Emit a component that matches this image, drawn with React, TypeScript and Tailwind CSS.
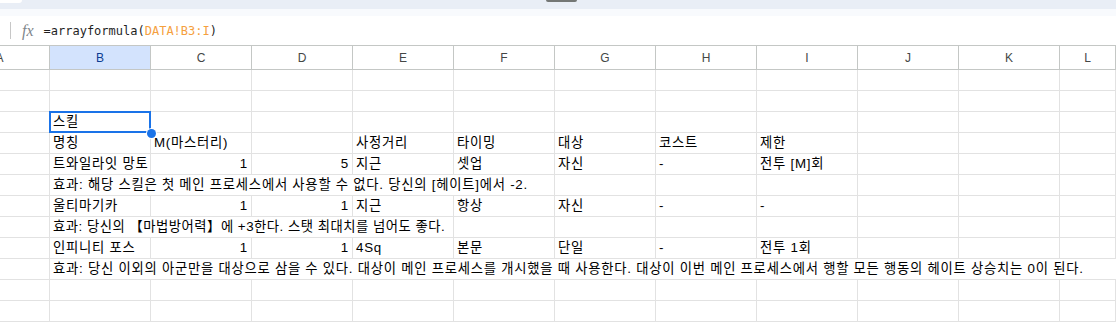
import React from 'react';

const COLS = ['A', 'B', 'C', 'D', 'E', 'F', 'G', 'H', 'I', 'J', 'K', 'L'];

type Cell = { t?: string; right?: boolean };
type Row = { cells?: Cell[]; span?: { text: string; cols: number; tight?: boolean } };

const empty = (): Row => ({ cells: COLS.map(() => ({})) });

const line = (vals: (string | [string, boolean])[]): Row => ({
    cells: COLS.map((_, i) => {
        const v = vals[i];
        if (v === undefined || v === '') return {};
        if (Array.isArray(v)) return { t: v[0], right: v[1] };
        return { t: v };
    }),
});

const rows: Row[] = [
    empty(),
    empty(),
    line(['', '스킬']),
    line(['', '명칭', 'M(마스터리)', '', '사정거리', '타이밍', '대상', '코스트', '제한']),
    line(['', '트와일라잇 망토', ['1', true], ['5', true], '지근', '셋업', '자신', '-', '전투 [M]회']),
    { span: { text: '효과: 해당 스킬은 첫 메인 프로세스에서 사용할 수 없다. 당신의 [헤이트]에서 -2.', cols: 5 } },
    line(['', '울티마기카', ['1', true], ['1', true], '지근', '항상', '자신', '-', '-']),
    // full-width brackets make this line run long, so tighten the tracking a little
    { span: { text: '효과: 당신의 【마법방어력】에 +3한다. 스탯 최대치를 넘어도 좋다.', cols: 4, tight: true } },
    line(['', '인피니티 포스', ['1', true], ['1', true], '4Sq', '본문', '단일', '-', '전투 1회']),
    { span: { text: '효과: 당신 이외의 아군만을 대상으로 삼을 수 있다. 대상이 메인 프로세스를 개시했을 때 사용한다. 대상이 이번 메인 프로세스에서 행할 모든 행동의 헤이트 상승치는 0이 된다.', cols: 11 } },
    empty(),
    empty(),
    empty(),
];

const colWidth = (i: number) => (i === 0 ? 'w-[50px]' : i === 11 ? 'flex-1' : 'w-[101px]');

const cellFont = { fontFamily: '"Liberation Sans", "Noto Sans CJK KR", sans-serif' };

const GridCell: React.FC<{ i: number; cell: Cell; selected?: boolean }> = ({ i, cell, selected }) => (
    <div
        className={`${colWidth(i)} shrink-0 h-[21px] border-r border-b border-[#e2e2e2] relative flex items-center px-[3px] text-[13.33px] tracking-[0.75px] text-black whitespace-nowrap ${selected ? 'z-10' : 'overflow-hidden'} ${cell.right ? 'justify-end pr-[3px]' : ''}`}
    >
        {cell.t}
        {selected && (
            <div className="absolute top-[-1px] left-[-1px] w-[102px] h-[22px] border-2 border-[#1a73e8]">
                <div className="absolute left-[96px] top-[16px] w-[9px] h-[9px] rounded-full bg-[#1a73e8] ring-1 ring-white" />
            </div>
        )}
    </div>
);

const App: React.FC = () => {
    return (
        <div className="w-[1116px] h-[322px] overflow-hidden bg-white" style={cellFont}>
            {/* top chrome */}
            <div className="h-[9px] bg-[#e9eef6] flex items-start">
                <div className="w-[22px] h-[3px] bg-white rounded-br-[6px]" />
                <div className="ml-[524px] w-[31px] h-[2px] bg-[#747775] rounded-b-sm" />
            </div>
            <div className="h-[7px] bg-[#f8fafd]" />

            {/* formula bar */}
            <div className="h-[29px] flex items-center bg-white">
                <div className="ml-[10px] w-px h-[17px] bg-[#c7c7c7]" />
                <span
                    className="ml-[11px] italic text-[16px] text-[#80868b] leading-none"
                    style={{ fontFamily: '"Liberation Serif", serif' }}
                >
                    fx
                </span>
                <span
                    className="ml-[10px] text-[12px] text-[#1f1f1f] leading-none"
                    style={{ fontFamily: '"DejaVu Sans Mono", "Liberation Mono", monospace' }}
                >
                    =arrayformula(<span className="text-[#f5a03e]">DATA!B3:I</span>)
                </span>
            </div>

            {/* column headers */}
            <div className="flex h-[25px] border-t border-b border-[#c4c7c5]">
                {COLS.map((c, i) => (
                    <div
                        key={c}
                        className={`${colWidth(i)} shrink-0 h-full border-r border-[#c4c7c5] flex items-center justify-center overflow-hidden text-[12px] ${i === 1 ? 'bg-[#d3e3fd] text-[#0b3d91]' : 'text-[#444746]'}`}
                    >
                        {i === 0 ? (
                            <div className="shrink-0 w-[100px] -ml-[50px] text-center">A</div>
                        ) : (
                            c
                        )}
                    </div>
                ))}
            </div>

            {/* grid */}
            <div className="flex flex-col">
                {rows.map((r, ri) => (
                    <div key={ri} className="flex">
                        {r.cells ? (
                            r.cells.map((cell, i) => (
                                <GridCell key={i} i={i} cell={cell} selected={ri === 2 && i === 1} />
                            ))
                        ) : (
                            <>
                                <GridCell i={0} cell={{}} />
                                <div
                                    className={`${r.span!.cols >= 11 ? 'flex-1' : 'border-r'} ${r.span!.tight ? 'tracking-[0.5px]' : 'tracking-[0.75px]'} shrink-0 h-[21px] border-b border-[#e2e2e2] flex items-center px-[3px] text-[13.33px] text-black whitespace-nowrap overflow-visible`}
                                    style={r.span!.cols < 11 ? { width: r.span!.cols * 101 } : undefined}
                                >
                                    {r.span!.text}
                                </div>
                                {r.span!.cols < 11 &&
                                    COLS.slice(1 + r.span!.cols).map((_, k) => (
                                        <GridCell key={k} i={1 + r.span!.cols + k} cell={{}} />
                                    ))}
                            </>
                        )}
                    </div>
                ))}
            </div>
        </div>
    );
};

export default App;
